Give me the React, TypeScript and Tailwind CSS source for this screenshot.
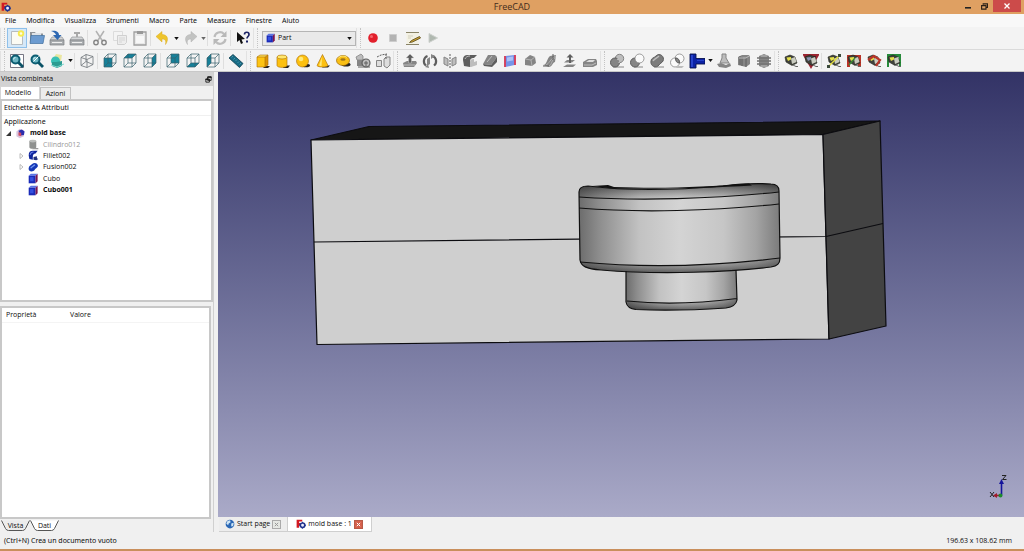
import React, { useState } from "react";

type Kids = { children?: React.ReactNode };

function Ico({ children, size = "size-4" }: Kids & { size?: string }) {
  return (
    <svg viewBox="0 0 16 16" className={`${size} shrink-0`} fill="none" aria-hidden="true">
      {children}
    </svg>
  );
}

function Tool({ label, active, children }: Kids & { label: string; active?: boolean }) {
  return (
    <button
      type="button"
      aria-label={label}
      title={label}
      className={`flex h-5 w-5 shrink-0 items-center justify-center border ${
        active ? "border-[#8fc0ea] bg-[#d5e8f8]" : "border-transparent hover:bg-[#e0ecf6]"
      }`}
    >
      <Ico>{children}</Ico>
    </button>
  );
}

function Drop({ label, muted }: { label: string; muted?: boolean }) {
  return (
    <button type="button" aria-label={label} className="flex h-5 w-[7px] shrink-0 items-center justify-center">
      <svg viewBox="0 0 6 4" className="h-[3px] w-[5px]" aria-hidden="true">
        <path d="M0 0h6L3 4z" fill={muted ? "#666" : "#111"} />
      </svg>
    </button>
  );
}

function Handle() {
  return (
    <span className="flex h-5 w-[7px] shrink-0 justify-center border-l border-[#e2e2e2]">
      <span className="h-full border-l border-dotted border-[#c4c4c4]" />
    </span>
  );
}

function Sep() {
  return <span className="mr-[2px] h-4 w-px shrink-0 bg-[#dedede]" />;
}

const faces: Record<string, string> = {
  front: "M2 5h8v9H2z",
  top: "M2 5l4-4h8l-4 4z",
  right: "M10 5l4-4v9l-4 4z",
  rear: "M6 1h8v9H6z",
  bottom: "M2 14l4-4h8l-4 4z",
  left: "M2 5l4-4v9l-4 4z",
};

function Wire({ face }: { face?: string }) {
  return (
    <>
      {face && <path d={faces[face]} fill="#168099" />}
      <path d="M2 5h8v9H2zM6 1h8v9H6zM2 5l4-4M10 5l4-4M10 14l4-4M2 14l4-4" stroke="#37606c" strokeWidth=".7" />
    </>
  );
}

function Lens({ page }: { page?: boolean }) {
  return (
    <>
      {page && <path d="M1.500 1.500h13v13h-13z" fill="#fff" stroke="#556" strokeWidth=".8" />}
      <circle cx="6.500" cy="6.500" r="4" fill="#6fb7c4" stroke="#0c5d72" strokeWidth="2" />
      <path d="M4.500 6.500a2 2 0 0 1 2-2" stroke="#d7f3f5" />
      <path d="M9.500 9.500l4.500 4.500" stroke="#0b5266" strokeWidth="2.800" />
      {!page && <path d="M4.500 8.500l5-5" stroke="#fff" />}
    </>
  );
}

function Logo() {
  return (
    <>
      <path d="M1 1h9v3H5v2.500h4v3H5V14H1z" fill="#d31a22" />
      <circle cx="10.500" cy="10" r="3.600" stroke="#22348f" strokeWidth="2.600" fill="#eef" />
      <path d="M10.500 4.500v2M10.500 13.500v2M5 10h2M14 10h2" stroke="#22348f" strokeWidth="1.600" />
    </>
  );
}

function BlueCube() {
  return (
    <>
      <path d="M1 4l3-3h10l-3 3z" fill="#5b74e6" />
      <path d="M1 4h10v11H1z" fill="#1a2bb8" />
      <path d="M11 4l3-3v11l-3 3z" fill="#7a1550" />
      <path d="M3 6h5v6H3z" fill="#3450e0" />
    </>
  );
}

const G = "#858585";
const D = "#5e5e5e";
const L = "#bdbdbd";

function Shape({ kind }: { kind: string }) {
  switch (kind) {
    case "new":
      return (
        <>
          <path d="M2.500 1.500h11v13h-11z" fill="#fbfbf4" stroke="#b7bcc0" />
          <circle cx="12" cy="3.500" r="3.200" fill="#f6ea50" />
          <circle cx="12" cy="3.500" r="1.300" fill="#fffde0" />
        </>
      );
    case "open":
      return (
        <>
          <path d="M1 2h5l1 1.500h7V13H1z" fill="#8f9397" />
          <path d="M3 3h9v5H3z" fill="#dfe3e8" />
          <path d="M2 5.500h13.500L14 13.500H1z" fill="#6c9bd0" stroke="#41709f" strokeWidth=".7" />
        </>
      );
    case "save":
    case "print":
      return (
        <>
          <path d="M3 7h10l2 3H1z" fill="#d4d6d7" stroke="#83878a" strokeWidth=".6" />
          <path d="M1 10h14v5H1z" fill="#a9adb0" stroke="#7b7f82" strokeWidth=".7" />
          <path d="M3 12.500h10" stroke="#eee" />
          {kind === "save" ? (
            <path d="M2 1c5-1 8 1 8 4h2.500L8.500 10 4 5h3C6.500 3 5 2 2 1z" fill="#2e68b2" />
          ) : (
            <path d="M5 2h6v2H9v3H7V4H5z" fill="#a9a9a9" />
          )}
        </>
      );
    case "cut":
      return (
        <>
          <path d="M4 1l6.500 10M12 1L5.500 11" stroke="#b2b2b2" strokeWidth="1.500" />
          <circle cx="4" cy="12.500" r="2.200" stroke="#858585" strokeWidth="1.400" />
          <circle cx="12" cy="12.500" r="2.200" stroke="#858585" strokeWidth="1.400" />
        </>
      );
    case "copy":
      return (
        <>
          <path d="M1.500 1.500h9v9h-9z" fill="#f4f4f4" stroke="#dcdcdc" />
          <path d="M5.500 5.500h9v7l-2 2h-7z" fill="#ededed" stroke="#d0d0d0" />
          <path d="M7 8h6M7 10h6M7 12h3" stroke="#ccc" strokeWidth=".7" />
        </>
      );
    case "paste":
      return (
        <>
          <path d="M2 2h12v13H2z" fill="#e8e8e8" stroke="#a0a0a0" strokeWidth="1.300" />
          <path d="M5 1h6v3H5z" fill="#989898" />
          <path d="M4 6h8v7H4z" fill="#f7f7f7" />
        </>
      );
    case "undo":
      return <path d="M1 6.500L7 1.500v3c5 0 7.500 4 3.500 10 1-4-.5-5.500-3.500-5.500v3z" fill="#eec42c" stroke="#d8ab20" strokeWidth=".5" />;
    case "redo":
      return <path d="M15 6.500L9 1.500v3c-5 0-7.500 4-3.500 10-1-4 .5-5.500 3.500-5.500v3z" fill="#c2c3c2" stroke="#b0b0b0" strokeWidth=".5" />;
    case "refresh":
      return (
        <>
          <path d="M2.500 7A5.500 5.500 0 0 1 12 4M13.500 9A5.500 5.500 0 0 1 4 12" stroke="#bcbcbc" strokeWidth="2.200" />
          <path d="M14.500 1v6h-6zM1.500 15V9h6z" fill="#b8b8b8" />
        </>
      );
    case "whats":
      return (
        <>
          <path d="M2 2v10l2.500-2L6 14l2-1-1.500-3.500L10 9z" fill="#111" />
          <path d="M9.500 4.500c0-3 4.500-3 4.500 0 0 2-2 2-2 4" stroke="#1c2466" strokeWidth="1.700" />
          <path d="M11 10.500h2v2h-2z" fill="#1c2466" />
        </>
      );
    case "record":
      return (
        <>
          <circle cx="8" cy="8" r="4.800" fill="#e21f2b" />
          <circle cx="6.500" cy="6.500" r="1.500" fill="#f4656c" />
        </>
      );
    case "stop":
      return <path d="M4.500 4.500h7v7h-7z" fill="#b3b3b3" stroke="#ccc" />;
    case "edit":
      return (
        <>
          <path d="M1.500 3h12v12h-12z" fill="#f3f1e3" />
          <path d="M1 2.500h13M1 14.500h13" stroke="#8a8468" />
          <path d="M3 6h5M3 8h3" stroke="#c6c2ac" strokeWidth=".7" />
          <path d="M14.500 6.500L6.500 10.500l-2 2 3-.5 8-4z" fill="#caa033" stroke="#574818" strokeWidth=".8" />
        </>
      );
    case "play":
      return <path d="M4 3.500l8.500 4.500L4 12.500z" fill="#b0b8b0" stroke="#ccd0cc" />;
    case "fit":
      return <Lens page />;
    case "zoom":
      return <Lens />;
    case "draw":
      return (
        <>
          <path d="M4 6l3-5 6 1-1 6z" fill="#e9e6a0" />
          <circle cx="6.500" cy="8" r="4.500" fill="#39c0b5" />
          <path d="M7 9l6-1v5l-5 2-5-2v-4z" fill="#2c9c91" />
          <path d="M2 12l6 2 7-3" stroke="#7cd6cd" />
        </>
      );
    case "axo":
      return <path d="M2 4.500l5-3 7 2v8l-6 3-6-2zM2 4.500l6 2 6-3M8 6.500v8M7 1.500v7l-5 4M7 8.500l7 3" stroke="#6d7478" strokeWidth=".8" />;
    case "measure":
      return (
        <>
          <path d="M1 5l4-3.500 10 9-3.500 4z" fill="#176b85" stroke="#0a3c4e" strokeWidth=".8" />
          <path d="M5 3l-1.500 1.500M7 5L5.500 6.500M9 6.500L7.500 8M11 8.500L9.500 10M13 10l-1.500 1.500" stroke="#5fa9ba" strokeWidth=".7" />
        </>
      );
    case "box":
      return (
        <>
          <path d="M10 13h5l-2 2H8z" fill="#222" />
          <path d="M2 4l3-2h8l-3 2z" fill="#ffe25c" />
          <path d="M2 4h8v10H2z" fill="#fdc414" />
          <path d="M10 4l3-2v10l-3 2z" fill="#dd9405" />
          <path d="M2 4h8v10H2zM2 4l3-2h8l-3 2M13 2v10l-3 2" stroke="#a96c00" strokeWidth=".6" />
        </>
      );
    case "cylinder":
      return (
        <>
          <path d="M9 12.500h6l-2 2.500H8z" fill="#222" />
          <path d="M2 4v8.500c0 2.500 10 2.500 10 0V4z" fill="#fcc010" stroke="#a96c00" strokeWidth=".6" />
          <ellipse cx="7" cy="4" rx="5" ry="2" fill="#ffe66b" stroke="#a96c00" strokeWidth=".6" />
        </>
      );
    case "sphere":
      return (
        <>
          <ellipse cx="11" cy="12.500" rx="4" ry="1.800" fill="#222" />
          <circle cx="7.500" cy="8" r="6" fill="#fcc010" stroke="#a96c00" strokeWidth=".6" />
          <circle cx="6" cy="6" r="2.300" fill="#ffe878" />
        </>
      );
    case "cone":
      return (
        <>
          <path d="M9 12.500h6l-2 2H7z" fill="#222" />
          <path d="M7.500 1.500L2 12.500c1 2 10 2 11 0z" fill="#fcc010" stroke="#a96c00" strokeWidth=".6" />
          <path d="M7 4l-3 8.500 2.500.8z" fill="#ffe878" />
        </>
      );
    case "torus":
      return (
        <>
          <ellipse cx="11" cy="11.500" rx="4.500" ry="2" fill="#222" />
          <ellipse cx="8" cy="7.500" rx="6.500" ry="5" fill="#f9bf14" stroke="#996400" strokeWidth=".7" />
          <ellipse cx="8" cy="6.500" rx="2.600" ry="1.300" fill="#9c741c" />
          <path d="M3 5.500c2-3 7-3 9-1" stroke="#ffe878" />
        </>
      );
    case "prims":
      return (
        <>
          <path d="M1 4l5-3 2 2v4H2z" fill={L} stroke={G} strokeWidth=".8" />
          <path d="M2 7h6v6H2z" fill={G} />
          <circle cx="11" cy="10" r="4" fill={L} stroke={D} strokeWidth="1.200" />
          <path d="M9 10h4M11 8v5M3 14h12" stroke={D} />
        </>
      );
    case "builder":
      return (
        <>
          <path d="M1.500 7.500h5v6h-5zM9 6l2-2h4v8l-3 3-3-2z" fill="#ddd" stroke={G} />
          <path d="M2 4l4-2 6-1M11 1v5" stroke={D} strokeDasharray="2 1" />
        </>
      );
    case "extrude":
      return (
        <>
          <path d="M1 10l4-2h9l1 2-3 4H2z" fill={G} />
          <path d="M8 1L4 5h2.500v5h3V5H12z" fill={D} stroke="#ccc" strokeWidth=".5" />
          <path d="M2 12h11" stroke={L} />
        </>
      );
    case "revolve":
      return (
        <>
          <path d="M5.500 3A5.500 5.500 0 0 0 4 12.500M10.500 3A5.500 5.500 0 0 1 12 12.500" stroke={D} strokeWidth="2.200" />
          <path d="M5 6l3-2v7l-3 2zM9 1l4 2-4 3zM7 15l-4-1 3-3z" fill={G} />
        </>
      );
    case "mirror":
      return (
        <>
          <path d="M2 4l4 2v7l-4-2zM14 4l-4 2v7l4-2z" fill={L} stroke={G} />
          <path d="M8 1v14" stroke={D} strokeDasharray="2 1" />
        </>
      );
    case "fillet":
      return (
        <>
          <path d="M1 7c0-4 2-5 5-5h9l-3 3c-3 0-4 1-4 4v5l-6-1z" fill={D} />
          <path d="M8 14V9c0-2 1-3 4-3v3l3-1v4l-6 2z" fill={L} />
          <path d="M3 6c1-2 2-3 5-3" stroke={L} />
        </>
      );
    case "chamfer":
      return (
        <>
          <path d="M6 2h7l2 2-6 8-8-1z" fill={G} />
          <path d="M1 11l8 1 6-8v5l-5 5-8-1z" fill={D} />
          <path d="M5 9l5-6" stroke={L} />
        </>
      );
    case "ruled":
      return (
        <>
          <path d="M3.500 3l9-1v10l-9 2z" fill="#7694e8" />
          <path d="M3 3v11M13 2v10" stroke="#d33554" strokeWidth="1.800" />
          <path d="M5 4.500l6-1v4l-6 1z" fill="#adc1f5" />
        </>
      );
    case "loft":
      return (
        <>
          <path d="M3 6l5-4 5 2 1 6-4 3-7-1z" fill={G} />
          <path d="M3 6l6 1 4-3M9 7l1 6" stroke={L} strokeWidth=".8" />
        </>
      );
    case "sweep":
      return (
        <>
          <path d="M1 12c4 0 4-7 7-9l6-1-1 7c-2 0-3 5-6 5z" fill={G} />
          <path d="M4 12c3-1 4-6 10-9M7 13c3-1 2-6 7-9" stroke={L} strokeWidth=".8" />
          <path d="M11 1v6M1 13h6" stroke={D} />
        </>
      );
    case "offset":
      return (
        <>
          <path d="M1 14l4-2.500h9L11 14zM2 9.500L5 7h8l-3 2.500z" fill={G} />
          <path d="M8 1L4.500 4.500H7V10h2V4.500h2.500z" fill={D} />
        </>
      );
    case "thick":
      return (
        <>
          <path d="M1 9l5-3h8l1 2v4l-4 2H1z" fill={G} />
          <path d="M4 9l3-2h6l-2 2z" fill="#ddd" />
          <path d="M2 12h8l4-2" stroke={L} />
        </>
      );
    case "bool":
      return (
        <>
          <path d="M4 13h11v2H4z" fill={L} />
          <circle cx="10.500" cy="5.500" r="4.200" fill={L} stroke={G} />
          <circle cx="6" cy="9.500" r="4.500" fill={G} stroke={D} />
          <path d="M8 6c2 0 3 2 2 4" stroke="#ddd" />
        </>
      );
    case "cutb":
      return (
        <>
          <path d="M5 13h9v2H5z" fill={L} />
          <circle cx="6" cy="9.500" r="4.500" fill={G} stroke={D} />
          <circle cx="10.500" cy="5.500" r="4.500" fill="#fafafa" stroke={G} strokeWidth=".8" />
        </>
      );
    case "union":
      return (
        <>
          <path d="M5 13h10v2H5z" fill={L} />
          <path d="M2 8c0-3 3-3 5-5 4-4 9 1 7 5-1 2-3 2-4 4-3 4-9 1-8-4z" fill="#7c7c7c" stroke={D} />
          <path d="M4 8c1-2 4-3 6-5" stroke={L} strokeWidth="1.400" />
        </>
      );
    case "common":
      return (
        <>
          <circle cx="10.500" cy="5.500" r="4.500" fill="#fafafa" stroke={G} strokeWidth=".8" />
          <circle cx="6" cy="9.500" r="4.500" fill="#fafafa" stroke={G} strokeWidth=".8" />
          <path d="M6.500 5c3 0 4 2 4 5-3 0-4-2-4-5z" fill={G} stroke={D} />
          <path d="M8 13h7l-2 2H7z" fill={L} />
        </>
      );
    case "join":
      return (
        <>
          <path d="M1 1h6v4.500h9v5.500H7v4H1z" fill="#0c22a5" stroke="#07124f" strokeWidth=".9" />
          <path d="M3 2v12" stroke="#3656e0" strokeWidth="1.300" />
          <path d="M8 7.500h7" stroke="#2743cb" />
        </>
      );
    case "check":
      return (
        <>
          <path d="M6 1h4v4l3 5H4l2-5z" fill={L} stroke={G} />
          <path d="M1 11l4-1 5 2 4-2 1 3-5 2-7-1z" fill={G} />
        </>
      );
    case "section":
      return (
        <>
          <path d="M2 4l4-2h7l1 2v7l-4 3-8-2z" fill={G} />
          <path d="M4 3v9M6 4v9M10 5v9" stroke={D} />
          <path d="M3 5h7l3-2" stroke={L} />
        </>
      );
    case "cross":
      return (
        <>
          <path d="M3 3l5-2 5 2v10l-5 2-5-2z" fill={G} />
          <path d="M1 5h14M1 8h14M1 11h14" stroke="#737373" strokeWidth="1.300" />
          <path d="M5 3h6M5 13h6" stroke={L} />
        </>
      );
    default:
      return <Tape kind={kind} />;
  }
}

function Tape({ kind }: { kind: string }) {
  return (
    <>
      {kind === "mgreen" && <path d="M1 1h14v13h-2V4H3v10H1z" fill="#278a3a" />}
      {kind === "mtoggle" && <path d="M1 2h14v12h-3V5H4v9H1z" fill="#b83428" />}
      {kind === "mangle" && <path d="M1 2h14L8 14z" fill="#3b2028" stroke="#9b2430" strokeWidth="2" />}
      <path d="M2 4l5-2 5 2 2 6-5 2.500L3 9z" fill="#3f413b" stroke="#24261f" strokeWidth=".6" />
      <path d="M8 5.500L12 4l1.500 5L9 11z" fill="#c9cbc0" />
      <path d="M3.500 4.500L8 4v2.500L5 8z" fill={kind === "mangle" ? "#8a93b4" : "#e5e04a"} />
      <path d="M10 12l3 1.500h2" stroke="#666" />
      {kind === "mrefresh" && (
        <>
          <path d="M2 14L14 2" stroke="#e2de40" strokeWidth="1.500" />
          <path d="M1 12h3v3H1zM12 1h3v3h-3z" fill="#3c4b3c" />
        </>
      )}
      {kind === "mclear" && <path d="M2 7l6-4 6 4-4 6" stroke="#b83428" strokeWidth="2.200" />}
      {kind === "mtoggle" && <path d="M3 12l6-7" stroke="#3a8a35" strokeWidth="1.300" />}
    </>
  );
}

function Tools({ items }: { items: [string, string][] }) {
  return (
    <>
      {items.map(([kind, label]) => (
        <Tool key={kind} label={label} active={kind === "new"}>
          {faces[kind] ? <Wire face={kind} /> : <Shape kind={kind} />}
        </Tool>
      ))}
    </>
  );
}

const menus = ["File", "Modifica", "Visualizza", "Strumenti", "Macro", "Parte", "Measure", "Finestre", "Aiuto"];

function Scene() {
  return (
    <svg viewBox="218 72 806 445" className="block h-full w-full" role="img" aria-label="mold base">
      <defs>
        <linearGradient id="cyl">
          <stop offset="0" stopColor="#6c6c6c" />
          <stop offset=".1" stopColor="#8d8d8d" />
          <stop offset=".3" stopColor="#c2c2c2" />
          <stop offset=".5" stopColor="#d4d4d4" />
          <stop offset=".72" stopColor="#c6c6c6" />
          <stop offset=".88" stopColor="#a4a4a4" />
          <stop offset="1" stopColor="#7b7b7b" />
        </linearGradient>
        <linearGradient id="rim" x2="0" y2="1">
          <stop offset="0" stopColor="#111" stopOpacity=".65" />
          <stop offset="1" stopColor="#333" stopOpacity=".05" />
        </linearGradient>
        <linearGradient id="base" x2="0" y2="1">
          <stop offset="0" stopColor="#333" stopOpacity=".05" />
          <stop offset="1" stopColor="#111" stopOpacity=".6" />
        </linearGradient>
      </defs>
      <g stroke="#0c0c10" strokeWidth="1.200" strokeLinejoin="round">
        <path d="M311 140L369 126.500 880 121 823 134.500z" fill="#161616" />
        <path d="M311 140L823 134.500 829 339 317 344.500z" fill="#cfcfcf" />
        <path d="M823 134.500L880 121 886 326 829 339z" fill="#434343" />
        <path d="M314 242L826 236.500 883 223.500" fill="none" />
      </g>
      <path d="M626 268V302c1 5 4 7 10 7.500 30 1.500 60 .5 90-1.500 7-1 10-3 11-8l-1-32z" fill="url(#cyl)" />
      <path d="M627 301c35 3.500 75 2 110-2.500-1 6-4 8.500-11 9.500-30 2-60 3-90 1.500-6-.5-8-3.500-9-8.500z" fill="url(#base)" />
      <path
        d="M579 192c0-4 3-6 9-6 40 5 90 4 135 0 20-2.500 34-3 48-2 6 0 8 3 8 7l1 67c0 6-3 8-9 9-40 5-110 8-170 3-15-1-20-4-21-10z"
        fill="url(#cyl)"
      />
      <path d="M579 197c60 4 135 2 200-5 0-5-2-8-8-8-14-1-28-.5-48 2-45 4-95 5-135 0-6 0-9 2-9 6z" fill="url(#rim)" />
      <path d="M580 262c65 6 135 4 200-4 0 6-3 8-9 9-40 5-110 8-170 3-15-1-20-4-21-8z" fill="url(#base)" />
      <g fill="none" stroke="#101010" strokeWidth="1.200">
        <path d="M579 192l1 68c1 6 6 9 21 10 60 5 130 2 170-3 6-1 9-3 9-9l-1-67c0-4-2-7-8-7-14-1-28-.5-48 2-45 4-95 5-135 0-6 0-9 2-9 6z" />
        <path d="M579 197c60 4 135 2 200-5M579 208c60 5 135 3 200-4M580 262c65 6 135 4 200-4" />
        <path d="M626 271v31c1 5 4 7 10 7.500 30 1.500 60 .5 90-1.500 7-1 10-3 11-8l-1-30M627 301c35 3.500 75 2 110-2.500" />
      </g>
      <path d="M592 186l16-1 6 2c50 2 90 0 135-3.500l3 2c-40 2.500-95 4-140 3z" fill="#111" />
    </svg>
  );
}

function Axes() {
  return (
    <svg viewBox="0 0 24 28" className="absolute right-3 bottom-4 h-7 w-6" fill="none" aria-hidden="true">
      <path d="M13.500 22V9" stroke="#14149c" strokeWidth="1.600" />
      <path d="M13.500 6L11 11h5z" fill="#14149c" />
      <path d="M13 22.500H7" stroke="#a01c2c" strokeWidth="1.600" />
      <path d="M9 20v5l-4-2.500z" fill="#a01c2c" />
      <circle cx="12.500" cy="22.500" r="2" fill="#1c8a2c" />
      <path d="M2 19l4 5M6 19l-4 5M14 2.500h4l-3.500 4h4" stroke="#222" />
    </svg>
  );
}

function TreeIcon({ kind }: { kind: string }) {
  return (
    <Ico size="size-[11px]">
      {kind === "doc" && (
        <>
          <path d="M2 5l5-4 6 3v8l-6 3-5-3z" fill="#d8c4dd" />
          <path d="M5 4l5-2 4 3-1 5-5 1z" fill="#2c2fae" />
          <path d="M5 6l4 1v5l-4-1z" fill="#d14a62" />
        </>
      )}
      {kind === "cyl" && (
        <>
          <path d="M2 3v9c0 3 10 3 10 0V3z" fill="#8f918f" />
          <ellipse cx="7" cy="3" rx="5" ry="2" fill="#bbbdbb" />
          <path d="M8 13h7v2H6z" fill="#999" />
        </>
      )}
      {kind === "fillet" && (
        <>
          <path d="M1 8c0-5 2-7 6-7h7l-3 4c-3 0-4 2-4 5v4l-5-1z" fill="#10259c" />
          <path d="M8 14v-4l5-1v3l2 1-3 2z" fill="#20307c" />
          <path d="M3 7c1-3 2-4 5-4" stroke="#6a83ea" strokeWidth="1.500" />
        </>
      )}
      {kind === "fusion" && (
        <>
          <path d="M1 9c0-3 3-4 5-6 4-4 10 0 8 4-1 2-3 2-4 4-3 5-10 3-9-2z" fill="#1537b4" />
          <path d="M4 9c1-2 4-3 6-5" stroke="#6f96f4" strokeWidth="2" />
        </>
      )}
      {kind === "cube" && <BlueCube />}
    </Ico>
  );
}

const tree = [
  { label: "mold base", icon: "doc", cls: "pl-1 font-bold", arrow: "open" },
  { label: "Cilindro012", icon: "cyl", cls: "pl-[17px] text-[#9a9a9a]", arrow: "" },
  { label: "Fillet002", icon: "fillet", cls: "pl-[17px]", arrow: "closed" },
  { label: "Fusion002", icon: "fusion", cls: "pl-[17px]", arrow: "closed" },
  { label: "Cubo", icon: "cube", cls: "pl-[17px]", arrow: "" },
  { label: "Cubo001", icon: "cube", cls: "pl-[17px] font-bold", arrow: "" },
];

function SidePanel() {
  const [tab, setTab] = useState("Modello");
  return (
    <aside className="flex w-[214px] shrink-0 flex-col border-r border-[#d0d0d0] bg-[#f0f0f0]">
      <header className="flex h-[14px] items-center justify-between bg-[#d2d2d2] pr-px pl-px">
        <h2>Vista combinata</h2>
        <button type="button" aria-label="Sgancia pannello">
          <svg viewBox="0 0 8 8" className="size-[7px]" fill="none" aria-hidden="true">
            <path d="M3 1h4v4H3zM1 3.500h4v3.500H1z" fill="#ddd" stroke="#111" />
            <path d="M3 1.300h4.500M.5 3.700H5" stroke="#111" strokeWidth="1.300" />
          </svg>
        </button>
      </header>
      <div role="tablist" className="flex h-[13px] items-end">
        {["Modello", "Azioni"].map((name) => (
          <button
            key={name}
            type="button"
            role="tab"
            aria-selected={tab === name}
            onClick={() => setTab(name)}
            className={
              tab === name
                ? "h-[13px] w-10 border-x border-t border-[#d5d5d5] bg-white pr-1"
                : "h-[12px] w-[31px] border border-b-0 border-[#c2c2c2] bg-[#ececec]"
            }
          >
            {name}
          </button>
        ))}
      </div>
      <div className="flex flex-[203] flex-col border-2 border-[#c8c8c8] bg-white">
        <div className="flex h-[15px] items-center border-b border-[#f0f0f0] pl-[2px] font-['Noto_Sans',sans-serif]">
          Etichette &amp; Attributi
        </div>
        <div className="grid h-20 auto-rows-fr" role="tree" aria-label="Applicazione">
          <div className="flex items-center pl-[2px] font-['Noto_Sans',sans-serif]">Applicazione</div>
          {tree.map((node) => (
            <div key={node.label} role="treeitem" className={`flex items-center gap-1 ${node.cls}`}>
              <span className="flex w-[5px] items-center">
                {node.arrow === "open" && (
                  <svg viewBox="0 0 5 5" className="size-[5px]" aria-hidden="true">
                    <path d="M5 0v5H0z" fill="#333" />
                  </svg>
                )}
                {node.arrow === "closed" && (
                  <svg viewBox="0 0 5 6" className="h-[6px] w-[5px]" aria-hidden="true">
                    <path d="M1 .5L4 3 1 5.500z" fill="#fff" stroke="#a0a0a0" strokeWidth=".7" />
                  </svg>
                )}
              </span>
              <span className="flex items-center gap-1">
                <TreeIcon kind={node.icon} />
                {node.label}
              </span>
            </div>
          ))}
        </div>
      </div>
      <div className="mt-1 mr-[2px] flex-[213] border-2 border-[#c8c8c8] bg-white">
        <table className="w-full table-fixed text-left">
          <thead>
            <tr className="h-[14px] border-b border-[#f4f4f4]">
              <th className="w-16 pl-1 font-normal">Proprietà</th>
              <th className="pl-1 font-normal">Valore</th>
            </tr>
          </thead>
        </table>
      </div>
      <div role="tablist" className="flex h-[13px] items-center pl-px">
        {["Vista", "Dati"].map((name) => (
          <button key={name} type="button" role="tab" aria-selected={name === "Dati"} className="grid h-[11px] w-[29px] place-items-center">
            <svg viewBox="0 0 29 11" className="col-start-1 row-start-1 h-[11px] w-[29px]" aria-hidden="true">
              <path d="M.5.500l4 8q1 2 3 2h14q2 0 3-2l4-8" fill={name === "Dati" ? "#fff" : "#ececec"} stroke="#555" />
            </svg>
            <span className="col-start-1 row-start-1">{name}</span>
          </button>
        ))}
      </div>
    </aside>
  );
}

function CloseBox({ label, red }: { label: string; red?: boolean }) {
  return (
    <button
      type="button"
      aria-label={label}
      className={`flex size-[9px] items-center justify-center border ${
        red ? "border-[#b85a48] bg-[#d5604c]" : "border-[#aaa] bg-[#e6e8e4]"
      }`}
    >
      <svg viewBox="0 0 6 6" className="size-[5px]" aria-hidden="true">
        <path d="M1 1l4 4M5 1L1 5" stroke={red ? "#fff" : "#999"} strokeWidth="1.200" />
      </svg>
    </button>
  );
}

export default function App() {
  return (
    <div className="flex min-h-screen flex-col bg-[#f0f0f0] font-['Open_Sans','Noto_Sans',sans-serif] text-[7px] leading-[10px] text-[#0c0c0c]">
      <header className="grid h-[14px] grid-cols-[1fr_auto_1fr] items-center bg-[#dfa062]">
        <span className="pl-px">
          <Ico size="size-[10px]">
            <Logo />
          </Ico>
        </span>
        <h1 className="text-[9px] text-[#3f2c1c]">FreeCAD</h1>
        <div className="flex h-full items-start justify-end">
          <button type="button" aria-label="Riduci a icona" className="flex h-3 w-4 items-center justify-center">
            <svg viewBox="0 0 6 6" className="size-[6px]" aria-hidden="true">
              <path d="M0 4h6v1.600H0z" fill="#222" />
            </svg>
          </button>
          <button type="button" aria-label="Ripristina" className="flex h-3 w-[17px] items-center justify-center">
            <svg viewBox="0 0 8 8" className="size-[7px]" fill="none" aria-hidden="true">
              <path d="M2.500 2V1h5v4H6M.7 3h5v4h-5z" stroke="#2b2017" strokeWidth="1.300" />
            </svg>
          </button>
          <button type="button" aria-label="Chiudi" className="mr-[3px] flex h-3 w-7 items-center justify-center bg-[#cc4b4a]">
            <svg viewBox="0 0 6 6" className="size-[6px]" aria-hidden="true">
              <path d="M.5.500l5 5M5.500.500l-5 5" stroke="#fff" strokeWidth="1.300" />
            </svg>
          </button>
        </div>
      </header>

      <nav className="flex h-[13px] items-center gap-[10px] bg-[#f8f8f8] pl-[5px] font-['Noto_Sans',sans-serif]">
        {menus.map((name) => (
          <button key={name} type="button">
            {name}
          </button>
        ))}
      </nav>

      <div role="toolbar" aria-label="File" className="flex h-[23px] items-center border-b border-[#dadada] bg-[#f3f3f3]">
        <Handle />
        <Tools items={[["new", "Nuovo"], ["open", "Apri"], ["save", "Salva"], ["print", "Stampa"]]} />
        <Sep />
        <Tools items={[["cut", "Taglia"], ["copy", "Copia"], ["paste", "Incolla"]]} />
        <Sep />
        <Tools items={[["undo", "Annulla"]]} />
        <Drop label="Elenco annulla" />
        <Tools items={[["redo", "Ripristina"]]} />
        <Drop label="Elenco ripristina" muted />
        <Sep />
        <Tools items={[["refresh", "Aggiorna"]]} />
        <Sep />
        <Tools items={[["whats", "Che cos'è?"]]} />
        <Handle />
        <div className="ml-[2px] grid h-[15px] w-[94px] items-center border border-[#b5b5b5] bg-[#e9e9e9]">
          <select
            aria-label="Ambiente di lavoro"
            className="col-start-1 row-start-1 h-full w-full appearance-none bg-transparent pl-[15px] leading-[10px]"
          >
            <option>Part</option>
          </select>
          <span className="pointer-events-none col-start-1 row-start-1 flex items-center justify-between px-[3px]">
            <Ico size="size-[10px]">
              <BlueCube />
            </Ico>
            <svg viewBox="0 0 6 4" className="h-[3px] w-[5px]" aria-hidden="true">
              <path d="M0 0h6L3 4z" fill="#111" />
            </svg>
          </span>
        </div>
        <Handle />
        <Tools items={[["record", "Registra macro"], ["stop", "Ferma"], ["edit", "Macro"], ["play", "Esegui macro"]]} />
      </div>

      <div role="toolbar" aria-label="Vista e Part" className="flex h-[22px] items-center border-b border-[#c8c8c8] bg-[#f3f3f3]">
        <Handle />
        <Tools items={[["fit", "Adatta tutto"], ["zoom", "Adatta selezione"], ["draw", "Stile"]]} />
        <Drop label="Elenco stili" />
        <Sep />
        <Tools items={[["axo", "Assonometrica"]]} />
        <Sep />
        <Tools items={[["front", "Frontale"], ["top", "Alto"], ["right", "Destra"]]} />
        <Sep />
        <Tools items={[["rear", "Posteriore"], ["bottom", "Basso"], ["left", "Sinistra"]]} />
        <Sep />
        <Tools items={[["measure", "Misura distanza"]]} />
        <Handle />
        <Tools
          items={[
            ["box", "Cubo"],
            ["cylinder", "Cilindro"],
            ["sphere", "Sfera"],
            ["cone", "Cono"],
            ["torus", "Toro"],
            ["prims", "Primitive"],
            ["builder", "Generatore di forme"],
          ]}
        />
        <Handle />
        <Tools
          items={[
            ["extrude", "Estrudi"],
            ["revolve", "Rivoluzione"],
            ["mirror", "Specchia"],
            ["fillet", "Raccordo"],
            ["chamfer", "Smusso"],
            ["ruled", "Superficie rigata"],
            ["loft", "Loft"],
            ["sweep", "Sweep"],
            ["offset", "Offset"],
            ["thick", "Spessore"],
          ]}
        />
        <Handle />
        <Tools
          items={[
            ["bool", "Operazione booleana"],
            ["cutb", "Sottrai"],
            ["union", "Unisci"],
            ["common", "Interseca"],
            ["join", "Connetti"],
          ]}
        />
        <Drop label="Elenco connetti" />
        <Tools items={[["check", "Controlla geometria"], ["section", "Sezione"], ["cross", "Sezioni trasversali"]]} />
        <Handle />
        <Tools items={[["mlinear", "Misura lineare"], ["mangle", "Misura angolare"]]} />
        <Sep />
        <Tools
          items={[
            ["mrefresh", "Aggiorna misure"],
            ["mtoggle", "Mostra misure"],
            ["mclear", "Cancella misure"],
            ["mgreen", "Mostra delta"],
          ]}
        />
      </div>

      <main className="flex flex-1">
        <SidePanel />
        <section className="ml-1 flex min-w-0 flex-1 flex-col">
          <div className="relative min-h-0 flex-1 bg-linear-to-b from-[#333366] to-[#aaaac8]">
            <Scene />
            <Axes />
          </div>
          <div className="flex h-[15px] items-stretch">
            <div className="ml-px flex items-center gap-[2px] border-r border-b border-[#cfcfcf] bg-[#ededed] px-[6px]">
              <Ico size="size-[10px]">
                <circle cx="8" cy="8" r="7" fill="#2a67b5" />
                <path d="M4 3l4-1 1 3-3 2-1 3-3-3zM10 7l4-1-1 5-3 1z" fill="#cfe6f5" />
              </Ico>
              <button type="button">Start page</button>
              <CloseBox label="Chiudi Start page" />
            </div>
            <div className="flex items-center gap-[2px] border-r border-b border-[#cfcfcf] bg-white px-2">
              <Ico size="size-[10px]">
                <Logo />
              </Ico>
              <button type="button">mold base : 1</button>
              <CloseBox label="Chiudi mold base" red />
            </div>
          </div>
        </section>
      </main>

      <footer className="flex h-[19px] items-center justify-between border-b-2 border-[#c98f5c] pr-3 pl-1">
        <span className="font-['Noto_Sans',sans-serif]">(Ctrl+N) Crea un documento vuoto</span>
        <span>196.63 x 108.62 mm</span>
      </footer>
    </div>
  );
}
